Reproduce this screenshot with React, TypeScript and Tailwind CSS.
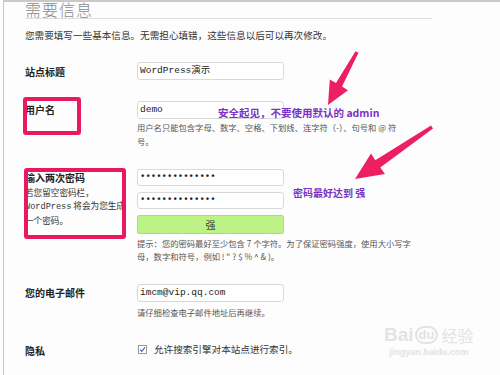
const cjk = "font-['Noto_Sans_CJK_SC','Noto_Sans',sans-serif]";
const mono = "font-['Liberation_Mono','Noto_Sans_CJK_SC',monospace]";

function Field({ children }: { children?: React.ReactNode }) {
  return (
    <div className={`h-[18px] w-[147px] rounded-[3px] border border-[#d9d9d9] bg-white px-[2px] flex items-center text-[9.5px] text-[#222] ${mono}`}>
      {children}
    </div>
  );
}

function Label({ children }: { children: React.ReactNode }) {
  return <div className="w-[112px] shrink-0 text-[10px] font-bold text-[#222]">{children}</div>;
}

function Secret({ className = "" }: { className?: string }) {
  return (
    <div className={`h-[17px] w-[147px] rounded-[3px] border border-[#d9d9d9] bg-white px-[2px] flex items-center text-[9px] font-bold text-[#222] ${mono} ${className}`}>
      ••••••••••••••
    </div>
  );
}

export default function App() {
  return (
    <div className={`relative h-[375px] w-[500px] overflow-hidden bg-[#fdfdfd] pl-[3px] ${cjk}`}>
      <div className="h-full border-l border-t-2 border-[#c9c9c9] pl-[21px]">
        {/* heading */}
        <div className="h-[20px] w-[407px] border-b border-[#dedede]">
          <h2 className="-mt-[3px] text-[16px] leading-[20px] font-light tracking-[1px] text-[#8a8a8a]">需要信息</h2>
        </div>
        <p className="mt-[8px] text-[9.6px] leading-[16px] text-[#333]">
          您需要填写一些基本信息。无需担心填错，这些信息以后可以再次修改。
        </p>

        {/* site title */}
        <div className="mt-[19px] flex items-center">
          <Label>站点标题</Label>
          <Field>WordPress演示</Field>
        </div>

        {/* user name */}
        <div className="mt-[21px] flex">
          <div className="w-[112px] shrink-0 text-[10px] font-bold leading-[18px] text-[#222]">用户名</div>
          <div>
            <Field>demo</Field>
            <div className="mt-[1px] text-[8.3px] leading-[14px] text-[#555]">
              <div className="whitespace-nowrap">用户名只能包含字母、数字、空格、下划线、连字符（-）、句号和 @ 符</div>
              <div>号。</div>
            </div>
          </div>
        </div>

        {/* password */}
        <div className="mt-[21px] flex">
          <div className="w-[112px] shrink-0 text-[#222]">
            <div className="text-[10px] font-bold leading-[17px]">输入两次密码</div>
            <div className="text-[8.6px] leading-[13px] text-[#333]">
              <div>若您留空密码栏，</div>
              <div className="whitespace-nowrap">
                <span className={mono}>WordPress</span> 将会为您生成
              </div>
              <div>一个密码。</div>
            </div>
          </div>
          <div>
            <Secret />
            <Secret className="mt-[6px]" />
            <div className="mt-[6px] flex h-[19px] w-[147px] items-center justify-center rounded-[2px] border border-[#a9e06a] bg-[#bdf386] text-[10px] text-[#333]">
              强
            </div>
            <div className="mt-[3px] text-[8.3px] leading-[13px] text-[#555]">
              <div className="whitespace-nowrap">提示：您的密码最好至少包含 7 个字符。为了保证密码强度，使用大小写字</div>
              <div className="whitespace-nowrap">母，数字和符号，例如 ! &quot; ? $ % ^ &amp; )。</div>
            </div>
          </div>
        </div>

        {/* email */}
        <div className="mt-[21px] flex">
          <div className="w-[112px] shrink-0 text-[10px] font-bold leading-[18px] text-[#222]">您的电子邮件</div>
          <div>
            <Field>imcm@vip.qq.com</Field>
            <div className="mt-[3px] text-[8.3px] leading-[14px] text-[#555]">请仔细检查电子邮件地址后再继续。</div>
          </div>
        </div>

        {/* privacy */}
        <div className="mt-[21px] flex items-center">
          <div className="w-[112px] shrink-0 pt-[4px] text-[10px] font-bold leading-[14px] text-[#222]">隐私</div>
          <div className="ml-[1px] flex items-center gap-[7px] text-[9.6px] leading-[14px] text-[#333]">
            <span className="flex h-[9px] w-[9px] items-center justify-center border border-[#9a9a9a] bg-white">
              <svg viewBox="0 0 10 10" className="h-[7px] w-[7px]">
                <path d="M1.5 5.2 L4 7.8 L8.6 1.8" fill="none" stroke="#3b5fa8" strokeWidth="1.6" />
              </svg>
            </span>
            允许搜索引擎对本站点进行索引。
          </div>
        </div>
      </div>

      {/* annotations */}
      <div className="absolute left-[218px] top-[105px] text-[10.5px] font-bold leading-[16px] text-[#7a32c4] whitespace-nowrap">
        安全起见，不要使用默认的 admin
      </div>
      <div className="absolute left-[293px] top-[185px] text-[10px] font-bold leading-[16px] text-[#7a32c4] whitespace-nowrap">
        密码最好达到 强
      </div>
      <div className="absolute left-[23px] top-[97px] h-[38px] w-[58px] rounded-[3px] border-[4px] border-[#e8195f]" />
      <div className="absolute left-[24px] top-[168px] h-[71px] w-[102px] rounded-[3px] border-[4px] border-[#e8195f]" />
      <svg className="pointer-events-none absolute left-0 top-0" width="500" height="375">
        <polygon
          points="358.5,52.8 342,86.6 348,90.2 328,105 329.8,79.6 336,83 355.5,51.2"
          fill="#ec1f63"
        />
        <polygon
          points="433,128.6 380.3,167.5 385,174 355,179 371,153.5 375.3,160.3 431,125.4"
          fill="#ec1f63"
        />
      </svg>

      {/* watermark */}
      <div className="absolute left-[384px] top-[324px] flex flex-col items-center text-[#e3e3e3]">
        <div className="flex items-center text-[19px] font-bold leading-[22px] font-['Liberation_Sans',sans-serif]">
          <span>Bai</span>
          <span className="mx-[1px] rounded-full border-2 border-[#e3e3e3] px-[2px] text-[13px] leading-[14px]">du</span>
          <span className={`ml-[2px] text-[16px] font-normal ${cjk}`}>经验</span>
        </div>
        <div className="text-[9px] font-bold leading-[12px] font-['Liberation_Sans',sans-serif]">jingyan.baidu.com</div>
      </div>
    </div>
  );
}
